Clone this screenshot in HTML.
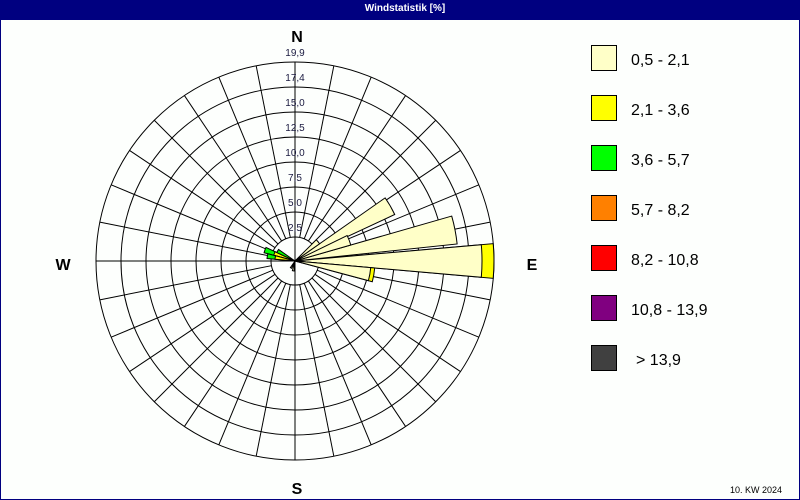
<!DOCTYPE html>
<html><head><meta charset="utf-8"><style>
body{margin:0;width:800px;height:500px;overflow:hidden;background:#fff}
.wrap{position:relative;width:798px;height:499px;border:1px solid #000080;border-top:none;background:#fdfffd}
.title{position:absolute;left:0;top:0;width:798px;height:20px;background:#000080;color:#fff;font:bold 10px "Liberation Sans",sans-serif;text-align:center;line-height:18px;padding-left:10px;box-sizing:border-box}
svg{position:absolute;left:0;top:0}
</style></head><body><div class="wrap"><div class="title">Windstatistik [%]</div>
<svg width="800" height="500" font-family="Liberation Sans, sans-serif">
<g fill="none" stroke="#000" stroke-width="1">
<circle cx="294" cy="261" r="199"/><circle cx="294" cy="261" r="174"/><circle cx="294" cy="261" r="149"/><circle cx="294" cy="261" r="124"/><circle cx="294" cy="261" r="99"/><circle cx="294" cy="261" r="74"/><circle cx="294" cy="261" r="49"/><circle cx="294" cy="261" r="24"/>
</g>
<g transform="translate(294,261)" stroke="#000" stroke-width="1">
<line x1="24" y1="0" x2="199" y2="0" transform="rotate(11.25)"/><line x1="24" y1="0" x2="199" y2="0" transform="rotate(22.5)"/><line x1="24" y1="0" x2="199" y2="0" transform="rotate(33.75)"/><line x1="24" y1="0" x2="199" y2="0" transform="rotate(45)"/><line x1="24" y1="0" x2="199" y2="0" transform="rotate(56.25)"/><line x1="24" y1="0" x2="199" y2="0" transform="rotate(67.5)"/><line x1="24" y1="0" x2="199" y2="0" transform="rotate(78.75)"/>
<line x1="24" y1="0" x2="199" y2="0" transform="rotate(101.25)"/><line x1="24" y1="0" x2="199" y2="0" transform="rotate(112.5)"/><line x1="24" y1="0" x2="199" y2="0" transform="rotate(123.75)"/><line x1="24" y1="0" x2="199" y2="0" transform="rotate(135)"/><line x1="24" y1="0" x2="199" y2="0" transform="rotate(146.25)"/><line x1="24" y1="0" x2="199" y2="0" transform="rotate(157.5)"/><line x1="24" y1="0" x2="199" y2="0" transform="rotate(168.75)"/>
<line x1="24" y1="0" x2="199" y2="0" transform="rotate(191.25)"/><line x1="24" y1="0" x2="199" y2="0" transform="rotate(202.5)"/><line x1="24" y1="0" x2="199" y2="0" transform="rotate(213.75)"/><line x1="24" y1="0" x2="199" y2="0" transform="rotate(225)"/><line x1="24" y1="0" x2="199" y2="0" transform="rotate(236.25)"/><line x1="24" y1="0" x2="199" y2="0" transform="rotate(247.5)"/><line x1="24" y1="0" x2="199" y2="0" transform="rotate(258.75)"/>
<line x1="24" y1="0" x2="199" y2="0" transform="rotate(281.25)"/><line x1="24" y1="0" x2="199" y2="0" transform="rotate(292.5)"/><line x1="24" y1="0" x2="199" y2="0" transform="rotate(303.75)"/><line x1="24" y1="0" x2="199" y2="0" transform="rotate(315)"/><line x1="24" y1="0" x2="199" y2="0" transform="rotate(326.25)"/><line x1="24" y1="0" x2="199" y2="0" transform="rotate(337.5)"/><line x1="24" y1="0" x2="199" y2="0" transform="rotate(348.75)"/>
<line x1="-199" y1="0" x2="199" y2="0"/><line x1="0" y1="-199" x2="0" y2="199"/>
</g>
<g font-size="10" fill="#1a1a40" text-anchor="middle">
<text x="294" y="56">19,9</text><text x="294" y="81">17,4</text><text x="294" y="106">15,0</text><text x="294" y="131">12,5</text><text x="294" y="156">10,0</text><text x="294" y="181">7,5</text><text x="294" y="206">5,0</text><text x="294" y="231">2,5</text>
</g>
<g transform="translate(294,261)" stroke="#000" stroke-width="1">
<path d="M0,0 L198.2,-17.35 A199,199 0 0 1 198.2,17.35Z" fill="#ffff00"/>
<path d="M0,0 L186.3,-16.3 A187,187 0 0 1 186.3,16.3Z" fill="#ffffc8"/>
<path d="M0,0 L162.4,-14.2 A163,163 0 0 1 162.4,14.2Z" fill="#ffffc8" transform="rotate(-11)"/>
<path d="M0,0 L109.6,-9.6 A110,110 0 0 1 109.6,9.6Z" fill="#ffffc8" transform="rotate(-30)"/>
<path d="M0,0 L57.8,-5.06 A58,58 0 0 1 57.8,5.06Z" fill="#ffffc8" transform="rotate(-21)"/>
<path d="M0,0 L29.9,-2.6 A30,30 0 0 1 29.9,2.6Z" fill="#ffffc8" transform="rotate(-40)"/>
<path d="M0,0 L79.7,-6.98 A80,80 0 0 1 79.7,6.98Z" fill="#ffff00" transform="rotate(10)"/>
<path d="M0,0 L75.7,-6.6 A76,76 0 0 1 75.7,6.6Z" fill="#ffffc8" transform="rotate(10)"/>
<path d="M0,0 L31.9,-2.8 A32,32 0 0 1 31.9,2.8Z" fill="#00ff00" transform="rotate(200)"/>
<path d="M0,0 L21.9,-1.9 A22,22 0 0 1 21.9,1.9Z" fill="#ffff00" transform="rotate(200)"/>
<path d="M0,0 L28,-2.4 A28,28 0 0 1 28,2.4Z" fill="#00ff00" transform="rotate(190)"/>
<path d="M0,0 L20,-1.8 A20,20 0 0 1 20,1.8Z" fill="#ffff00" transform="rotate(190)"/>
<path d="M0,0 L20,-1.8 A20,20 0 0 1 20,1.8Z" fill="#00ff00" transform="rotate(210)"/>
<path d="M0,0 L10,-0.9 A10,10 0 0 1 10,0.9Z" fill="#ffffc8" transform="rotate(100)"/>
<path d="M0,0 L8,-0.7 A8,8 0 0 1 8,0.7Z" fill="#ffffc8" transform="rotate(120)"/>
</g>
<g font-size="16" font-weight="bold" fill="#000" text-anchor="middle">
<text x="296" y="42">N</text><text x="296" y="494">S</text><text x="62" y="270">W</text><text x="531" y="270">E</text>
</g>
<g stroke="#000" stroke-width="1">
<rect x="590.5" y="45.5" width="25" height="25" fill="#ffffc8"/>
<rect x="590.5" y="95.5" width="25" height="25" fill="#ffff00"/>
<rect x="590.5" y="145.5" width="25" height="25" fill="#00ff00"/>
<rect x="590.5" y="195.5" width="25" height="25" fill="#ff8000"/>
<rect x="590.5" y="245.5" width="25" height="25" fill="#ff0000"/>
<rect x="590.5" y="295.5" width="25" height="25" fill="#800080"/>
<rect x="590.5" y="345.5" width="25" height="25" fill="#404040"/>
</g>
<g font-size="16" fill="#000">
<text x="630" y="65">0,5 - 2,1</text><text x="630" y="115">2,1 - 3,6</text><text x="630" y="165">3,6 - 5,7</text><text x="630" y="215">5,7 - 8,2</text><text x="630" y="265">8,2 - 10,8</text><text x="630" y="315">10,8 - 13,9</text><text x="635" y="365">&gt; 13,9</text>
</g>
<text x="729" y="493" font-size="9" fill="#000">10. KW 2024</text>
</svg></div></body></html>
